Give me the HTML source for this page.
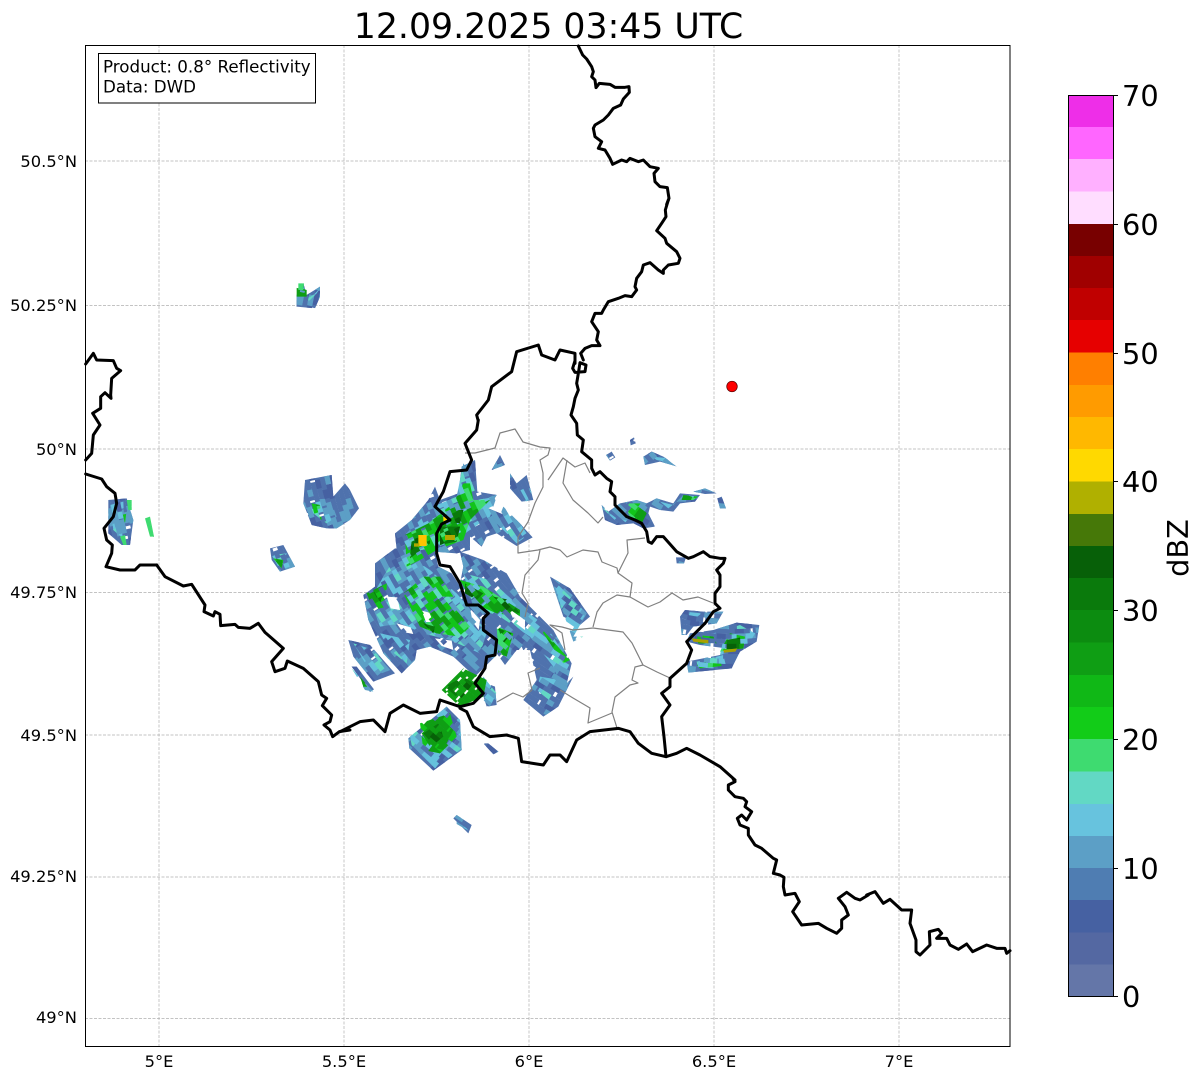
<!DOCTYPE html>
<html><head><meta charset="utf-8"><style>
html,body{margin:0;padding:0;background:#fff;width:1202px;height:1081px;overflow:hidden}
svg{display:block}
text{font-family:"DejaVu Sans",sans-serif;fill:#000}
</style></head><body>
<svg width="1202" height="1081" viewBox="0 0 1202 1081" xmlns="http://www.w3.org/2000/svg">
<defs>
<g id="rings" transform="translate(732 386.5)" fill="none" stroke-width="5.2">
<g stroke-dashoffset="0"><circle r="100"/><circle r="135"/><circle r="170"/><circle r="205"/><circle r="240"/><circle r="275"/><circle r="310"/><circle r="345"/><circle r="380"/><circle r="415"/><circle r="450"/><circle r="485"/><circle r="520"/><circle r="555"/><circle r="590"/><circle r="625"/></g>
<g stroke-dashoffset="37"><circle r="105"/><circle r="140"/><circle r="175"/><circle r="210"/><circle r="245"/><circle r="280"/><circle r="315"/><circle r="350"/><circle r="385"/><circle r="420"/><circle r="455"/><circle r="490"/><circle r="525"/><circle r="560"/><circle r="595"/><circle r="630"/></g>
<g stroke-dashoffset="11"><circle r="110"/><circle r="145"/><circle r="180"/><circle r="215"/><circle r="250"/><circle r="285"/><circle r="320"/><circle r="355"/><circle r="390"/><circle r="425"/><circle r="460"/><circle r="495"/><circle r="530"/><circle r="565"/><circle r="600"/><circle r="635"/></g>
<g stroke-dashoffset="53"><circle r="115"/><circle r="150"/><circle r="185"/><circle r="220"/><circle r="255"/><circle r="290"/><circle r="325"/><circle r="360"/><circle r="395"/><circle r="430"/><circle r="465"/><circle r="500"/><circle r="535"/><circle r="570"/><circle r="605"/><circle r="640"/></g>
<g stroke-dashoffset="23"><circle r="120"/><circle r="155"/><circle r="190"/><circle r="225"/><circle r="260"/><circle r="295"/><circle r="330"/><circle r="365"/><circle r="400"/><circle r="435"/><circle r="470"/><circle r="505"/><circle r="540"/><circle r="575"/><circle r="610"/><circle r="645"/></g>
<g stroke-dashoffset="71"><circle r="125"/><circle r="160"/><circle r="195"/><circle r="230"/><circle r="265"/><circle r="300"/><circle r="335"/><circle r="370"/><circle r="405"/><circle r="440"/><circle r="475"/><circle r="510"/><circle r="545"/><circle r="580"/><circle r="615"/><circle r="650"/></g>
<g stroke-dashoffset="5"><circle r="130"/><circle r="165"/><circle r="200"/><circle r="235"/><circle r="270"/><circle r="305"/><circle r="340"/><circle r="375"/><circle r="410"/><circle r="445"/><circle r="480"/><circle r="515"/><circle r="550"/><circle r="585"/><circle r="620"/></g>
</g>
<clipPath id="cB" transform="translate(340 420) scale(.33333)">
<polygon points="365,140 405,120 412,215 470,225 445,265 530,300 578,352 530,378 470,340 440,350 425,380 390,350 390,390 350,400 280,395 240,420 210,450 170,390 165,340 215,300 265,240 285,200 300,240 355,220"/>
<polygon points="105,430 165,385 240,395 285,395 295,440 335,460 400,560 440,590 470,660 470,705 430,745 405,770 340,710 270,680 230,690 225,720 185,760 130,700 85,600 70,525 105,500"/>
<polygon points="360,395 430,420 500,460 540,530 640,630 695,730 680,790 700,770 655,860 610,890 550,840 590,780 570,690 530,690 495,735 470,700 470,660 430,600 380,555 360,490 370,440"/>
<polygon points="25,660 90,675 165,760 100,785 40,710"/>
<polygon points="35,740 50,740 102,808 90,816"/>
<polygon points="510,160 530,190 560,165 580,240 545,245 510,205"/>
<polygon points="455,150 480,105 495,135"/>
<polygon points="630,470 690,505 750,590 720,615 670,590"/>
<polygon points="415,780 465,800 470,855 440,860"/>
<polygon points="430,970 445,970 475,995 460,1003"/>
<polygon points="205,955 320,860 360,900 365,990 280,1052 208,985"/>
<polygon points="870,60 882,52 887,70 872,76"/>
<polygon points="798,105 815,95 826,112 810,122"/>
<polygon points="910,110 935,95 970,110 1020,142 960,125 915,135"/>
<polygon points="785,255 805,275 840,250 890,240 920,250 950,235 1000,250 1020,220 1080,225 1065,245 1020,250 1000,275 960,270 930,260 925,280 945,320 910,325 880,310 830,315 795,300"/>
<polygon points="1060,215 1095,205 1130,220 1095,222"/>
<polygon points="1132,235 1145,230 1158,265 1140,265"/>
<polygon points="1008,412 1038,412 1032,430 1010,430"/>
<polygon points="1020,590 1035,570 1090,575 1150,575 1130,610 1060,620 1040,645 1025,645"/>
<polygon points="1050,640 1120,630 1190,608 1258,615 1250,665 1200,695 1175,745 1045,758 1040,725 1140,705 1160,685 1080,675 1040,665"/>
<polygon points="-695,240 -640,235 -620,300 -630,375 -655,375 -695,340"/>
<polygon points="-105,180 -25,165 -20,230 15,190 30,210 57,265 30,300 -10,325 -40,325 -85,315 -110,250"/>
<polygon points="-210,385 -170,375 -135,440 -180,455 -205,420"/>
<polygon points="-130,-375 -110,-410 -100,-375 -60,-400 -60,-370 -75,-335 -130,-340"/>
<polygon points="340,1195 350,1185 395,1215 385,1240"/>
</clipPath>
<clipPath id="cL" transform="translate(340 420) scale(.33333)">
<polygon points="130,470 180,390 270,450 350,520 410,590 440,640 420,700 330,660 250,640 180,610 120,620 90,540"/>
<polygon points="370,130 400,170 410,240 470,230 450,290 330,370 200,400 190,350 280,260 350,230"/>
<polygon points="370,460 450,480 540,560 620,620 690,730 660,790 640,740 570,650 480,590 400,560"/>
<polygon points="480,620 520,650 510,720 470,690"/>
<polygon points="490,260 570,340 530,370 470,310"/>
<polygon points="530,190 575,215 560,245"/>
<polygon points="430,770 470,820 450,860 420,830"/>
<polygon points="40,670 100,690 150,750 100,770"/>
<polygon points="35,745 100,815 75,810"/>
<polygon points="600,770 660,780 640,850 590,810"/>
<polygon points="640,480 740,580 700,650 730,650 700,665 660,550"/>
<polygon points="120,640 210,660 200,730 150,690"/>
<polygon points="210,950 320,860 360,900 365,985 285,1045 215,975"/>
<polygon points="935,110 990,115 1000,130 950,120"/>
<polygon points="790,265 830,295 880,305 820,310 795,295"/>
<polygon points="960,245 1000,255 1030,225 1075,230 1060,245 1010,245 985,265"/>
<polygon points="1035,575 1085,580 1065,595 1040,590"/>
<polygon points="1070,725 1150,705 1160,745 1075,745"/>
<polygon points="1120,640 1200,615 1245,640 1220,685 1140,705 1150,660"/>
<polygon points="-690,255 -650,245 -645,360 -680,330"/>
<polygon points="-95,240 -30,235 -10,290 -40,310 -80,280"/>
<polygon points="-205,405 -160,400 -150,440 -180,450"/>
<polygon points="-125,-350 -100,-350 -70,-380 -60,-395 -80,-375"/>
<polygon points="350,1205 380,1225 385,1232 350,1212"/>
</clipPath>
<clipPath id="cG" transform="translate(340 420) scale(.33333)">
<polygon points="195,345 265,310 340,250 370,190 390,190 400,240 450,240 390,300 370,360 290,390 240,420 200,440"/>
<polygon points="80,520 140,490 140,560 100,570"/>
<polygon points="190,520 240,480 340,560 390,620 360,650 290,640 240,620"/>
<polygon points="250,470 300,470 340,530 300,530"/>
<polygon points="360,480 430,500 540,570 540,590 470,580 400,550"/>
<polygon points="470,620 520,640 500,710 475,700"/>
<polygon points="590,610 690,720 670,730"/>
<polygon points="60,770 85,800 70,800"/>
<polygon points="850,250 900,250 920,280 905,310 870,290"/>
<polygon points="1070,645 1120,650 1130,670 1075,670"/>
<polygon points="1140,695 1170,640 1215,650 1210,685"/>
<polygon points="1070,735 1140,715 1145,738 1080,745"/>
<polygon points="1030,225 1075,230 1060,240 1025,240"/>
<polygon points="-85,250 -60,255 -55,300 -75,290"/>
<polygon points="-200,415 -170,420 -175,445"/>
<polygon points="-655,270 -640,270 -645,310"/>
<polygon points="-570,325 -558,350 -570,352"/>
<polygon points="240,910 330,880 350,950 300,1000 250,990"/>
</clipPath>
<clipPath id="cD" transform="translate(340 420) scale(.33333)">
<polygon points="215,360 270,340 270,370 210,415"/>
<polygon points="330,270 370,270 360,310 330,305"/>
<polygon points="300,320 360,320 350,365 300,375"/>
<polygon points="375,490 430,520 410,540 375,520"/>
<polygon points="460,530 510,540 540,580 500,570"/>
<polygon points="475,625 515,640 490,670"/>
<polygon points="250,610 285,620 280,640"/>
<polygon points="100,515 130,520 120,550"/>
<polygon points="1160,660 1200,653 1202,685 1160,688"/>
<polygon points="315,800 370,770 400,790 360,840"/>
<polygon points="250,940 295,910 310,950 280,975"/>
</clipPath>
<clipPath id="cS" transform="translate(340 420) scale(.33333)">
<polygon points="305,810 370,745 440,780 430,830 360,860"/>
<polygon points="245,940 300,890 340,930 310,990 270,980"/>
<polygon points="-130,-400 -100,-390 -100,-370 -130,-370"/>
</clipPath>
<clipPath id="cT" transform="translate(340 420) scale(.33333)">
<polygon points="-640,240 -625,240 -625,270 -635,270"/>
<polygon points="-585,295 -570,290 -558,350 -570,350"/>
<polygon points="-125,-410 -108,-410 -110,-390 -125,-390"/>
<polygon points="-660,350 -645,345 -640,375 -650,375"/>
</clipPath>
<clipPath id="cH" transform="translate(340 420) scale(.33333)">
<polygon points="140,530 172,532 180,570 152,565"/>
<polygon points="170,610 212,622 220,642 188,636"/>
<polygon points="245,572 268,578 280,606 258,606"/>
<polygon points="285,655 335,662 340,690 305,678"/>
<polygon points="390,565 420,600 416,630 398,605"/>
<polygon points="505,565 555,600 555,630 525,608"/>
<polygon points="545,680 590,780 545,790 510,720"/>
</clipPath>
</defs>
<rect width="1202" height="1081" fill="#fff"/>
<text x="548.5" y="38" font-size="34.7" text-anchor="middle">12.09.2025 03:45 UTC</text>
<!-- grid -->
<g stroke="#b0b0b0" stroke-width="0.7" stroke-dasharray="3 1.5">
<path d="M159 45V1046M344 45V1046M529 45V1046M714 45V1046M899 45V1046"/>
<path d="M85 161H1010M85 305.500H1010M85 449H1010M85 592.500H1010M85 735H1010M85 877H1010M85 1018.500H1010"/>
</g>
<!-- radar -->
<g clip-path="url(#cB)">
<use href="#rings" stroke="#4f72ad" stroke-dasharray="64 2 33 2 47 3"/>
<use href="#rings" stroke="#4661a2" stroke-dasharray="15 38 9 57"/>
<use href="#rings" stroke="#5c9fc6" stroke-dasharray="11 39 18 55 7 35"/>
</g>
<g clip-path="url(#cL)">
<use href="#rings" stroke="#66c2dd" stroke-dasharray="11 21 24 34 7 19"/>
<use href="#rings" stroke="#5c9fc6" stroke-dasharray="9 46 14 61"/>
<use href="#rings" stroke="#62d8c4" stroke-dasharray="7 57 10 75"/>
</g>
<g clip-path="url(#cG)">
<use href="#rings" stroke="#3edb70" stroke-dasharray="9 41 14 59"/>
<use href="#rings" stroke="#12c41a" stroke-dasharray="11 15 19 25 8 19"/>
<use href="#rings" stroke="#0f9e14" stroke-dasharray="14 33 11 45"/>
</g>
<g clip-path="url(#cS)">
<use href="#rings" stroke="#0f9e14" stroke-dasharray="30 2 12 2"/>
</g>
<g clip-path="url(#cD)">
<use href="#rings" stroke="#0a7a0c" stroke-dasharray="12 9 17 15"/>
<use href="#rings" stroke="#076008" stroke-dasharray="8 29 10 31"/>
</g>
<g clip-path="url(#cT)">
<use href="#rings" stroke="#3edb70"/>
</g>
<g clip-path="url(#cH)">
<use href="#rings" stroke="#fff" stroke-dasharray="20 5 32 6"/>
</g>
<g transform="translate(340 420) scale(.33333)">
<rect x="235" y="345" width="25" height="33" fill="#ffc400"/><rect x="310" y="290" width="16" height="16" fill="#ffd900"/><rect x="315" y="345" width="30" height="15" fill="#b0a800"/>
<rect x="222" y="370" width="16" height="10" fill="#b0a800"/>
<polygon points="1055,655 1105,660 1105,670 1060,665" fill="#a8a000"/><polygon points="1150,690 1192,685 1186,695 1152,698" fill="#a8a000"/>
</g>
<!-- gray lines -->
<g fill="none" stroke="#808080" stroke-width="1.200" stroke-linejoin="round">
<path d="M465,453L475,453 495,448 500,433 515,429 523,442 540,447 550,448 548,455 540,460 543,473 543,487 535,503 528,522 518,537 518,553 538,550 550,547 560,550 567,557 583,550 598,552 602,562 617,568 618,573 628,553 627,540 645,538"/>
<path d="M548,480L563,458 575,467 585,463 590,473M567,460L563,483 573,500 588,513 598,523 603,517"/>
<path d="M618,573L632,583 630,597 617,595 603,603 597,612 593,627M630,597L648,607 660,602 672,593 683,600 698,597 713,603"/>
<path d="M540,550L538,560 525,575 522,593 528,603 525,617"/>
<path d="M593,628L623,632 632,643 643,665 657,672 670,678M643,665L635,667 632,680 638,683 630,685 615,697 612,712 617,728M612,713L588,723 590,708 573,698 560,690"/>
<path d="M593,628L573,630 562,627 550,625 562,633 565,650M532,690L528,673 540,668M497,702L513,693 523,697 532,690"/>
</g>
<!-- black borders -->
<g fill="none" stroke="#000" stroke-linejoin="round" stroke-linecap="round">
<path transform="translate(560 45) scale(.33333)" stroke-width="9" d="M55,3L68,30 80,42 95,65 100,80 95,95 105,105 108,128 118,115 150,118 165,127 195,127 207,125 208,142 190,162 182,180 160,190 145,210 130,225 105,240 100,250 105,275 125,290 115,310 135,315 150,340 158,358 185,345 200,350 210,340 235,350 250,345 270,365 295,370 282,385 285,410 300,425 322,428 327,460 320,478"/>
<path transform="translate(560 200) scale(.33333)" stroke-width="9" d="M325,0L316,30 318,50 305,70 290,92 315,115 320,130 350,155 360,175 355,190 325,195 310,210 310,220 295,210 270,188 250,195 245,215 230,235 225,260 230,270 215,290 195,287 175,295 145,305 130,330 125,340 105,340 95,365 105,380 115,395 110,420 120,437 95,437 75,445 62,460 70,480"/>
<path transform="translate(460 340) scale(.33333)" stroke-width="9" d="M345,62L338,85 345,97 375,95 378,75 360,68 355,100 350,130 355,150 345,175 340,200 333,225 350,250 352,285 370,300 365,335 395,360 395,385 405,405 420,395 440,415 455,425 450,455 465,470 465,495 500,530 525,540 545,550 560,575 565,605 575,610 590,590 610,590 650,635 685,655 700,650 730,635 750,650 780,655 795,655 790,670 770,690 780,705 780,740 765,760 765,790 780,805 760,815 735,850 680,905 695,930 680,970 630,1015 630,1040 605,1060 630,1095 605,1130 612,1190 618,1250 650,1240 680,1225 720,1245 780,1280 825,1320"/>
<path transform="translate(720 770) scale(.33333)" stroke-width="9" d="M40,28L45,35 25,45 25,60 45,80 70,85 80,95 75,110 95,125 80,150 65,135 52,145 60,165 85,175 85,195 105,225 125,235 160,265 170,270 160,310 180,315 192,322 190,350 195,375 225,370 238,395 218,425 245,465 295,460 320,475 350,490 365,475 365,450 385,435 375,410 355,385 380,367 405,385 420,390 445,375"/>
<path transform="translate(830 880) scale(.33333)" stroke-width="9" d="M110,45L135,35 160,70 180,58 215,90 245,90 240,130 258,180 258,215 270,225 300,195 298,155 325,148 335,160 320,175 350,175 360,195 385,208 410,192 428,215 470,195 500,205 525,205 530,220 540,212"/>
<path transform="translate(460 340) scale(.33333)" stroke-width="9" d="M618,1250L575,1240 535,1210 510,1175 475,1165 390,1175 350,1200 320,1265 300,1245 270,1245 250,1275 185,1265 175,1195 140,1185 90,1190 40,1160 20,1115 0,1105"/>
<path transform="translate(150 555) scale(.33333)" stroke-width="9" d="M20,30L45,65 100,93 125,88 165,150 162,170 190,183 195,170 210,178 212,212 255,208 265,217 300,220 325,205 345,232 400,280 365,320 375,350 405,340 412,318 460,340 505,380 515,420 530,430 517,452 545,480 540,500 522,510 540,525 548,545 568,530 600,525"/>
<path transform="translate(80 270) scale(.33333)" stroke-width="9" d="M17,612L65,627 80,650 105,670 110,700 100,740 72,775 80,810 97,825 95,850 78,890 120,900 165,900 180,885 230,885"/>
<path transform="translate(80 270) scale(.33333)" stroke-width="9" d="M17,282L40,250 50,270 100,272 110,295 122,302 95,325 92,375 93,385 75,368 62,380 62,415 38,430 60,465 40,495 35,550 17,570"/>
<path transform="translate(340 420) scale(.33333)" stroke-width="9" d="M0,935L60,905 100,900 135,935 150,880 190,855 240,880 290,875 300,840 360,860 400,850 430,820 405,790 435,745 440,710 465,705 470,660 430,630 430,595 445,580 415,555 380,555 360,490 330,440 300,435 290,400 290,340 305,312 330,300 285,260 310,215 330,155 380,150 395,120 375,70 410,30 415,0"/>
<path transform="translate(460 340) scale(.33333)" stroke-width="9" d="M54,240L50,225 85,180 95,140 155,95 170,35 235,15 245,45 285,60 300,30 345,40 345,70"/>
</g>
<circle cx="732" cy="386.500" r="5.300" fill="#f00" stroke="#500" stroke-width=".7"/>
<!-- axes frame -->
<rect x="85.500" y="45.500" width="924.500" height="1001" fill="none" stroke="#000" stroke-width="1"/>
<!-- legend -->
<rect x="98.500" y="53.500" width="217" height="49.500" fill="#fff" stroke="#000" stroke-width="1"/>
<text x="103" y="72.500" font-size="16.700">Product: 0.8° Reflectivity</text>
<text x="103" y="92.500" font-size="16.700">Data: DWD</text>
<!-- tick labels -->
<g font-size="16.300" text-anchor="end">
<text x="77" y="167">50.5°N</text><text x="77" y="311">50.25°N</text><text x="77" y="455">50°N</text><text x="77" y="598">49.75°N</text><text x="77" y="741">49.5°N</text><text x="77" y="882">49.25°N</text><text x="77" y="1023">49°N</text>
</g>
<g font-size="16.300" text-anchor="middle">
<text x="159" y="1067">5°E</text><text x="344" y="1067">5.5°E</text><text x="529" y="1067">6°E</text><text x="714" y="1067">6.5°E</text><text x="899" y="1067">7°E</text>
</g>
<!-- colorbar -->
<g>
<rect x="1068" y="95" width="45" height="32.500" fill="#ee2ee8"/>
<rect x="1068" y="127" width="45" height="32.500" fill="#ff66ff"/>
<rect x="1068" y="159" width="45" height="33" fill="#ffb0ff"/>
<rect x="1068" y="191.500" width="45" height="33" fill="#ffddff"/>
<rect x="1068" y="224" width="45" height="32.500" fill="#780000"/>
<rect x="1068" y="256" width="45" height="32.500" fill="#a00000"/>
<rect x="1068" y="288" width="45" height="32.500" fill="#c00000"/>
<rect x="1068" y="320" width="45" height="33" fill="#e60000"/>
<rect x="1068" y="352.500" width="45" height="33" fill="#ff7f00"/>
<rect x="1068" y="385" width="45" height="32.500" fill="#ff9b00"/>
<rect x="1068" y="417" width="45" height="32.500" fill="#ffb800"/>
<rect x="1068" y="449" width="45" height="33" fill="#ffd900"/>
<rect x="1068" y="481.500" width="45" height="33" fill="#b0b000"/>
<rect x="1068" y="514" width="45" height="32.500" fill="#467808"/>
<rect x="1068" y="546" width="45" height="32.500" fill="#076008"/>
<rect x="1068" y="578" width="45" height="32.500" fill="#0a7a0c"/>
<rect x="1068" y="610" width="45" height="33" fill="#0c8c10"/>
<rect x="1068" y="642.500" width="45" height="33" fill="#0f9e14"/>
<rect x="1068" y="675" width="45" height="32.500" fill="#10b816"/>
<rect x="1068" y="707" width="45" height="32.500" fill="#12cc18"/>
<rect x="1068" y="739" width="45" height="33" fill="#3edb70"/>
<rect x="1068" y="771.500" width="45" height="33" fill="#62d8c4"/>
<rect x="1068" y="804" width="45" height="32.500" fill="#67c3de"/>
<rect x="1068" y="836" width="45" height="32.500" fill="#5c9fc6"/>
<rect x="1068" y="868" width="45" height="32.500" fill="#4f7db2"/>
<rect x="1068" y="900" width="45" height="33" fill="#4661a2"/>
<rect x="1068" y="932.500" width="45" height="32" fill="#5468a2"/>
<rect x="1068" y="964.500" width="45" height="31.500" fill="#6476a8"/>
<rect x="1068.500" y="95.500" width="45" height="901" fill="none" stroke="#000" stroke-width="1"/>
<path d="M1113 95.500h5M1113 224.500h5M1113 353.500h5M1113 481.500h5M1113 610.500h5M1113 739.500h5M1113 868.500h5M1113 996.500h5" stroke="#000" stroke-width="1"/>
</g>
<g font-size="28.800">
<text x="1122" y="106">70</text><text x="1122" y="235">60</text><text x="1122" y="364">50</text><text x="1122" y="492">40</text><text x="1122" y="621">30</text><text x="1122" y="750">20</text><text x="1122" y="879">10</text><text x="1122" y="1007">0</text>
</g>
<text transform="translate(1188 548) rotate(-90)" font-size="28.800" text-anchor="middle">dBZ</text>
</svg>
</body></html>
